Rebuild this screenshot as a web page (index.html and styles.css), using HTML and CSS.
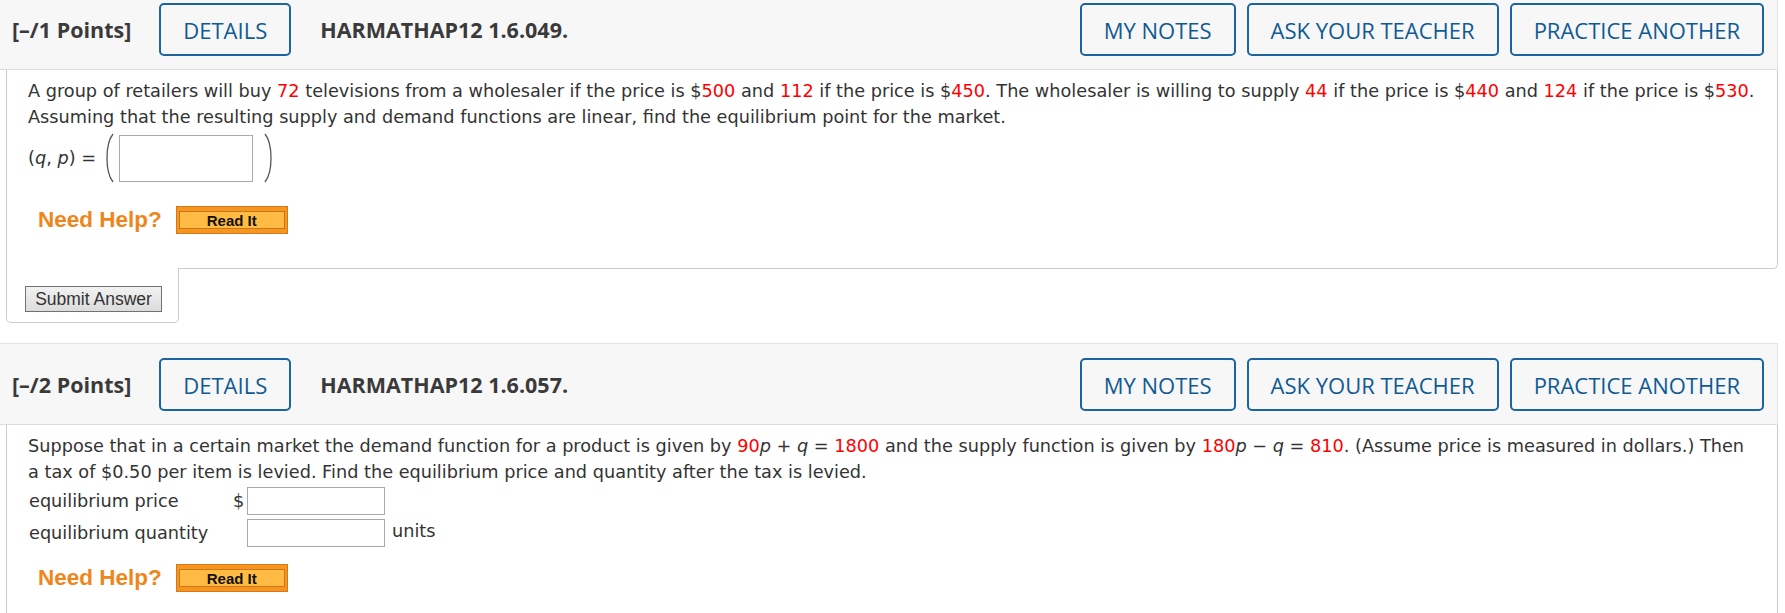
FILE: index.html
```html
<!DOCTYPE html>
<html>
<head>
<meta charset="utf-8">
<link rel="stylesheet" href="styles.css">
</head>
<body>
<div class="question first">
  <div class="qhead">
    <span class="points">[–/1 Points]</span>
    <button class="hbtn details">DETAILS</button>
    <span class="qid">HARMATHAP12 1.6.049.</span>
    <span class="spacer"></span>
    <button class="hbtn">MY NOTES</button>
    <button class="hbtn">ASK YOUR TEACHER</button>
    <button class="hbtn">PRACTICE ANOTHER</button>
  </div>
  <div class="qbody">
    <p class="qtext">A group of retailers will buy <span class="red">72</span> televisions from a wholesaler if the price is $<span class="red">500</span> and <span class="red">112</span> if the price is $<span class="red">450</span>. The wholesaler is willing to supply <span class="red">44</span> if the price is $<span class="red">440</span> and <span class="red">124</span> if the price is $<span class="red">530</span>. Assuming that the resulting supply and demand functions are linear, find the equilibrium point for the market.</p>
    <div class="pair-row">
      <span class="pair-label">(<i>q</i>, <i>p</i>) =</span>
      <svg class="paren" width="14" height="52" viewBox="0 0 14 52"><path d="M11 2 C3 12 3 40 11 50" fill="none" stroke="#555" stroke-width="1.3"/></svg>
      <span class="box big"></span>
      <svg class="paren right" width="14" height="52" viewBox="0 0 14 52"><path d="M3 2 C11 12 11 40 3 50" fill="none" stroke="#555" stroke-width="1.3"/></svg>
    </div>
    <div class="help">
      <span class="need">Need Help?</span>
      <span class="readit"><span class="readit-inner">Read It</span></span>
    </div>
  </div>
  <div class="submit-tab"><button class="submit">Submit Answer</button></div>
</div>

<div class="question second">
  <div class="qhead">
    <span class="points">[–/2 Points]</span>
    <button class="hbtn details">DETAILS</button>
    <span class="qid">HARMATHAP12 1.6.057.</span>
    <span class="spacer"></span>
    <button class="hbtn">MY NOTES</button>
    <button class="hbtn">ASK YOUR TEACHER</button>
    <button class="hbtn">PRACTICE ANOTHER</button>
  </div>
  <div class="qbody">
    <p class="qtext">Suppose that in a certain market the demand function for a product is given by <span class="red">90</span><i>p</i> + <i>q</i> = <span class="red">1800</span> and the supply function is given by <span class="red">180</span><i>p</i> − <i>q</i> = <span class="red">810</span>. (Assume price is measured in dollars.) Then a tax of $0.50 per item is levied. Find the equilibrium price and quantity after the tax is levied.</p>
    <div class="grid">
      <span class="lbl">equilibrium price</span>
      <span class="dollar">$</span>
      <span class="box small"></span>
      <span></span>
      <span class="lbl">equilibrium quantity</span>
      <span></span>
      <span class="box small"></span>
      <span class="units">units</span>
    </div>
    <div class="help help2">
      <span class="need">Need Help?</span>
      <span class="readit"><span class="readit-inner">Read It</span></span>
    </div>
  </div>
</div>
</body>
</html>
```
FILE: styles.css
```css
html, body {
  margin: 0;
  padding: 0;
  background: #fff;
  overflow: hidden;
}
body {
  width: 1785px;
  font-family: "DejaVu Sans", Verdana, sans-serif;
  color: #333;
}
.question {
  width: 1778px;
}
.question.first {
  margin-top: -12px;
}
.question.second {
  margin-top: 20px;
}
.qhead {
  display: flex;
  align-items: center;
  background: #f7f7f7;
  border-top: 1px solid #e2e2e2;
  border-right: 1px solid #e2e2e2;
  border-bottom: 1px solid #dcdcdc;
  padding: 14px 13px 13px 12px;
  font-family: "Open Sans", sans-serif;
}
.points, .qid {
  font-weight: 700;
  font-size: 21.5px;
  color: #3a3a3a;
}
.qid {
  margin-left: 29px;
}
.spacer {
  flex: 1;
}
.hbtn {
  height: 53px;
  box-sizing: border-box;
  border: 2px solid #1b64a0;
  border-radius: 5px;
  background: transparent;
  color: #0f5a93;
  font-family: "Open Sans", sans-serif;
  font-size: 22px;
  padding: 0 22px;
  margin-left: 11px;
}
.hbtn.details {
  margin-left: 28px;
}
.qbody {
  margin-left: 6px;
  border-left: 1px solid #ccc;
  border-right: 1px solid #ccc;
  border-bottom: 1px solid #ccc;
  border-bottom-right-radius: 5px;
  padding: 8px 21px 34px 21px;
}
.second .qbody {
  border-bottom: none;
  padding-bottom: 40px;
}
.qtext {
  margin: 0;
  font-size: 17.7px;
  line-height: 26px;
}
.red {
  color: #f00;
}
.pair-row {
  display: flex;
  align-items: center;
  margin-top: 1px;
  height: 54px;
  font-size: 17.7px;
}
.pair-label {
  margin-right: 6px;
}
.paren {
  display: block;
}
.paren.right {
  margin-left: 9px;
}
.box {
  display: block;
  box-sizing: border-box;
  border: 1px solid #a9a9a9;
  background: #fff;
}
.box.big {
  width: 134px;
  height: 47px;
  margin-left: 3px;
}
.box.small {
  width: 138px;
  height: 28px;
}
.help {
  display: flex;
  align-items: center;
  height: 28px;
  margin-top: 21px;
  margin-left: 10px;
}
.help2 {
  margin-top: 15px;
}
.need {
  font-family: "Liberation Sans", Arial, sans-serif;
  font-weight: 700;
  font-size: 22.5px;
  color: #f0861a;
  margin-right: 14px;
}
.readit {
  display: flex;
  box-sizing: border-box;
  width: 112px;
  height: 28px;
  padding: 4px 2px 4px 2px;
  background: #f6961f;
  border: 1px solid #d9781a;
}
.readit-inner {
  flex: 1;
  display: flex;
  align-items: center;
  justify-content: center;
  background: #ffbb44;
  border: 1px solid #c9761c;
  font-family: "Liberation Sans", Arial, sans-serif;
  font-weight: 700;
  font-size: 15px;
  color: #111;
}
.submit-tab {
  margin-left: 6px;
  margin-top: -1px;
  width: 173px;
  box-sizing: border-box;
  background: #fff;
  border-left: 1px solid #ccc;
  border-right: 1px solid #ccc;
  border-bottom: 1px solid #ccc;
  border-bottom-left-radius: 5px;
  border-bottom-right-radius: 5px;
  padding: 18px 0 10px 18px;
}
.submit {
  display: block;
  width: 137px;
  height: 26px;
  box-sizing: border-box;
  border: 1px solid #707070;
  background: linear-gradient(#f2f2f2, #dcdcdc);
  font-family: "Liberation Sans", Arial, sans-serif;
  font-size: 17.5px;
  color: #333;
  padding: 0;
}
.grid {
  display: grid;
  grid-template-columns: 203px 15px 138px auto;
  grid-auto-rows: 32px;
  align-items: center;
  margin-top: 0;
  font-size: 17.7px;
  padding-left: 1px;
}
.dollar {
  padding-left: 1px;
}
.units {
  margin-left: 7px;
  margin-top: -4px;
}
```
